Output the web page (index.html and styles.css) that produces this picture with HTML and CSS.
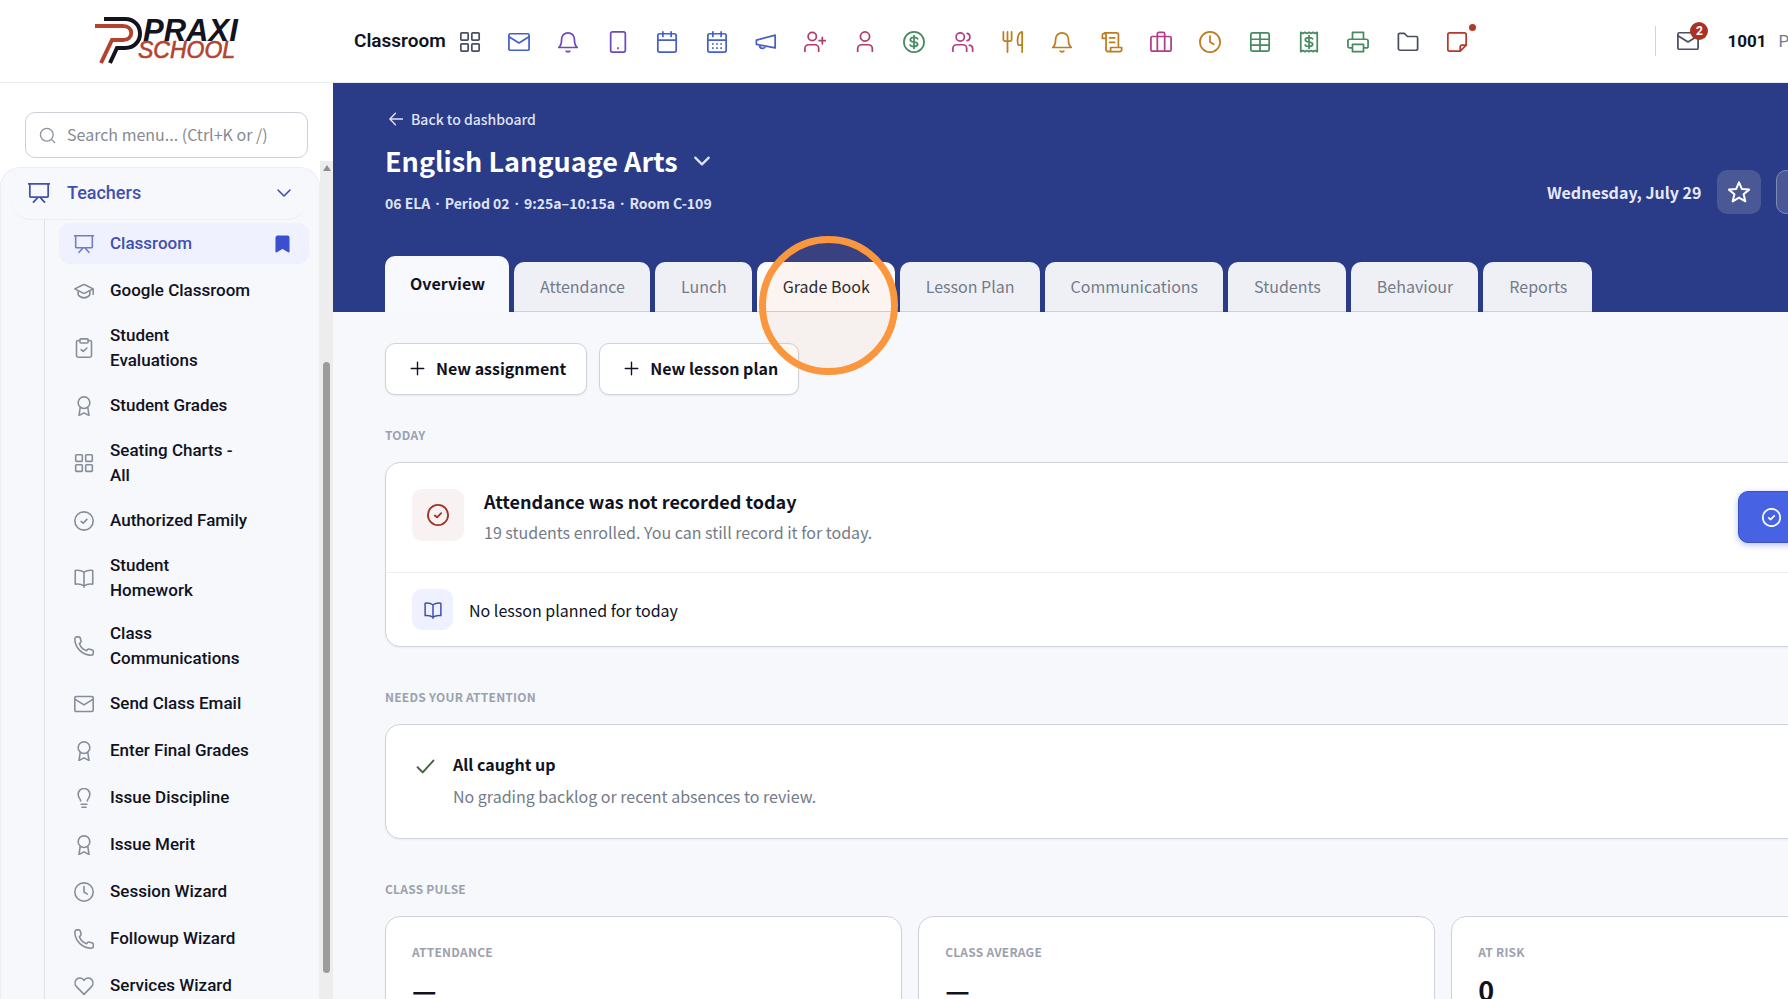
FILE: index.html
```html
<!DOCTYPE html>
<html lang="en">
<head>
    <meta charset="UTF-8">
    <meta name="viewport" content="width=device-width, initial-scale=1.0">
    <title>Classroom - Praxi School</title>
    <link rel="stylesheet" href="styles.css">
</head>
<body>
    <!-- icon sprite -->
    <svg class="sprite" aria-hidden="true">
        <symbol id="i-grid" viewBox="0 0 24 24"><rect x="2" y="2" width="8" height="8" rx="1"/><rect x="14" y="2" width="8" height="8" rx="1"/><rect x="2" y="14" width="8" height="8" rx="1"/><rect x="14" y="14" width="8" height="8" rx="1"/></symbol>
        <symbol id="i-mail" viewBox="0 0 24 24"><rect x="1" y="3" width="22" height="18" rx="1.5"/><path d="M1.5 6.5 12 13l10.500-6.500"/></symbol>
        <symbol id="i-bell" viewBox="0 0 24 24"><path d="M2 18c2.500-2 3-4.500 3-9a7 7 0 0 1 14 0c0 4.500.5 7 3 9zM10 22q2 1.500 4 0"/></symbol>
        <symbol id="i-phone" viewBox="0 0 24 24"><rect x="4" y="1" width="16" height="22" rx="2"/><path d="M12 18.500v.5"/></symbol>
        <symbol id="i-cal" viewBox="0 0 24 24"><rect x="2" y="3" width="20" height="20" rx="2"/><path d="M2 10h20M7.500 1v5M16.500 1v5"/></symbol>
        <symbol id="i-caldots" viewBox="0 0 24 24"><rect x="2" y="3" width="20" height="20" rx="2"/><path d="M2 10h20M7.500 1v5M16.500 1v5M7.500 14v.2M12 14v.2M16.500 14v.2M7.500 18.500v.2M12 18.500v.2M16.500 18.500v.2"/></symbol>
        <symbol id="i-horn" viewBox="0 0 24 24"><path d="M1.500 10 22 4.500v14L1.500 14.500zM5 15.500c0 4.500 6 4.500 6 1"/></symbol>
        <symbol id="i-useradd" viewBox="0 0 24 24"><circle cx="9" cy="6" r="4.500"/><path d="M1 22v-3a4 4 0 0 1 4-4h7a4 4 0 0 1 4 4v3M20 7v7M16.500 10.500h7"/></symbol>
        <symbol id="i-user" viewBox="0 0 24 24"><circle cx="12" cy="6" r="5"/><path d="M4 22v-2.500a4.500 4.500 0 0 1 4.500-4.500h7a4.500 4.500 0 0 1 4.500 4.500V22"/></symbol>
        <symbol id="i-dollar" viewBox="0 0 24 24"><circle cx="12" cy="12" r="11"/><path d="M16 8.500c-.5-1-1.500-1.500-4-1.500s-4 .7-4 2.500 1.500 2.300 4 2.500 4 .8 4 2.500-1.500 2.500-4 2.500-3.700-.5-4.200-1.700M12 5v14"/></symbol>
        <symbol id="i-users" viewBox="0 0 24 24"><circle cx="9" cy="6.500" r="4.500"/><path d="M1 22v-3a4 4 0 0 1 4-4h7a4 4 0 0 1 4 4v3M16.500 2.500c4 .5 4 7.500 0 8M19 15.500c2.500.5 3.500 2 3.500 3.500v3"/></symbol>
        <symbol id="i-fork" viewBox="0 0 24 24"><path d="M1.500 1v8a2 2 0 0 0 2 2h5a2 2 0 0 0 2-2V1M6 1v22M22 1v22M22 1c-3 0-5 4-5 9 0 3 .5 5.500 1.500 5.500H22"/></symbol>
        <symbol id="i-scroll" viewBox="0 0 24 24"><path d="M4 2h13a2 2 0 0 1 2 2v13M1.500 8h4V4.500a2 2 0 0 0-4 0zM5.500 8v12a2.500 2.500 0 0 0 2.500 2.500h12.500a2 2 0 0 0 2-2V18H10.500v2.500a2 2 0 0 1-2 2M9.500 7.500H15M9.500 12.500H15"/></symbol>
        <symbol id="i-case" viewBox="0 0 24 24"><rect x="1" y="6" width="22" height="16" rx="1.500"/><path d="M8 22V3a1.500 1.500 0 0 1 1.500-1.500h5A1.500 1.500 0 0 1 16 3v19"/></symbol>
        <symbol id="i-clock" viewBox="0 0 24 24"><circle cx="12" cy="12" r="11"/><path d="M12 5.500V12l4 2.500"/></symbol>
        <symbol id="i-table" viewBox="0 0 24 24"><rect x="2" y="2" width="20" height="20" rx="2"/><path d="M2 9h20M2 15.500h20M12 2v20"/></symbol>
        <symbol id="i-receipt" viewBox="0 0 24 24"><path d="M3 1.500l2.300 1.200L7.500 1.500l2.300 1.200L12 1.500l2.200 1.200 2.300-1.200 2.200 1.200L21 1.500v21l-2.300-1.200-2.200 1.200-2.300-1.200L12 22.500l-2.200-1.200-2.300 1.200-2.200-1.200L3 22.500zM16 8.500c-.5-1-1.500-1.300-4-1.300s-4 .7-4 2.400 1.500 2.200 4 2.400 4 .8 4 2.400-1.500 2.400-4 2.400-3.700-.5-4.200-1.500M12 5v14"/></symbol>
        <symbol id="i-print" viewBox="0 0 24 24"><path d="M6 9V1.500h12V9M6 18.500H3a2 2 0 0 1-2-2V11a2 2 0 0 1 2-2h18a2 2 0 0 1 2 2v5.500a2 2 0 0 1-2 2h-3M6 14.500h12v8H6z"/></symbol>
        <symbol id="i-folder" viewBox="0 0 24 24"><path d="M1.500 4a1.500 1.500 0 0 1 1.500-1.500h5L11.500 6H21a1.500 1.500 0 0 1 1.500 1.500V19a2 2 0 0 1-2 2h-17a2 2 0 0 1-2-2z"/></symbol>
        <symbol id="i-note" viewBox="0 0 24 24"><path d="M22 15.500V4a2 2 0 0 0-2-2H4a2 2 0 0 0-2 2v16a2 2 0 0 0 2 2h11.500zM15.500 22v-4.500a2 2 0 0 1 2-2H22"/></symbol>
        <symbol id="i-board" viewBox="0 0 24 24"><path d="M.5 2h23M2 2v13.500a1 1 0 0 0 1 1h18a1 1 0 0 0 1-1V2M10.500 17 6 22M13.500 17l4.500 5"/></symbol>
        <symbol id="i-cap" viewBox="0 0 24 24"><path d="M1 9.500 11 4.500q1-.5 2 0l10 5-10 5q-1 .5-2 0zM5 12v4.500c3.500 5 10.500 5 14 0V12M23 9.500V16"/></symbol>
        <symbol id="i-clip" viewBox="0 0 24 24"><path d="M7 3H5a2 2 0 0 0-2 2v16a2 2 0 0 0 2 2h14a2 2 0 0 0 2-2V5a2 2 0 0 0-2-2h-2M8.500 14l2.500 2 4.500-4"/><rect x="7" y="1" width="10" height="5" rx="1.500"/></symbol>
        <symbol id="i-award" viewBox="0 0 24 24"><circle cx="12" cy="8" r="7"/><path d="M7.500 13.500 6 23.300l6-3 6 3-1.500-9.800"/></symbol>
        <symbol id="i-check" viewBox="0 0 24 24"><circle cx="12" cy="12" r="11"/><path d="M8.500 12.500l2.500 2 4.500-4.500"/></symbol>
        <symbol id="i-book" viewBox="0 0 24 24"><path d="M12 5C9 3 5 2.500 1.500 3v16.500C5 19 9 19.500 12 21.500 15 19.500 19 19 22.500 19.500V3C19 2.500 15 3 12 5zM12 5v18"/></symbol>
        <symbol id="i-tel" viewBox="0 0 24 24"><path d="M1 3.500A2.500 2.500 0 0 1 3.500 1h2.300q1.200 0 1.600 1.200l1.100 4q.3 1-.6 1.700L6.500 9.200c1.500 4 4.500 7 8.500 8.500l1.300-1.500q.7-.8 1.700-.5l4 1.100q1.200.4 1.200 1.600v2.100a2.500 2.500 0 0 1-2.500 2.500C10 23 1 14 1 3.500z"/></symbol>
        <symbol id="i-bulb" viewBox="0 0 24 24"><path d="M8 15.500c0-2.500-3-3.500-3-8a7 7 0 0 1 14 0c0 4.500-3 5.500-3 8M8.500 19.500h7M9.500 23h5"/></symbol>
        <symbol id="i-heart" viewBox="0 0 24 24"><path d="M12 22 3 12.800C-2.500 6 6.500-2 12 5.200 17.500-2 26.500 6 21 12.800z"/></symbol>
        <symbol id="i-search" viewBox="0 0 24 24"><circle cx="11" cy="11" r="9"/><path d="M17.500 17.500 22 22"/></symbol>
        <symbol id="i-down" viewBox="0 0 24 24"><path d="M3 7.500l9 9 9-9"/></symbol>
        <symbol id="i-back" viewBox="0 0 24 24"><path d="M23 12H2M11 2 1.500 12 11 22"/></symbol>
        <symbol id="i-plus" viewBox="0 0 24 24"><path d="M12 2v20M2 12h20"/></symbol>
        <symbol id="i-tick" viewBox="0 0 24 24"><path d="M2 13l6.500 6.500L22 4.500"/></symbol>
        <symbol id="i-star" viewBox="0 0 24 24"><path d="M12 1.500l3.100 7.200 7.900.7-6 5.100 1.900 7.700L12 18.100l-6.900 4.100L7 14.500 1 9.400l7.900-.7z"/></symbol>
        <symbol id="i-mark" viewBox="0 0 24 24"><path d="M3 3a2 2 0 0 1 2-2h14a2 2 0 0 1 2 2v20l-9-5-9 5z"/></symbol>
    </svg>

    <div class="app">
        <header class="topbar">
            <a class="brand" href="#" aria-label="Praxi School">
                <svg class="brand-logo" viewBox="0 0 150 56" aria-hidden="true">
                    <path class="mark-dark" d="M14 6h21c20 0 20 29 0 29h-8L20 50"/>
                    <path class="mark-red" d="M5 13h28c11 0 11 14 0 14H22L11 50"/>
                    <text class="name-dark" x="53" y="28" font-size="31">PRAXI</text>
                    <text class="name-red" x="48" y="45" font-size="23">SCHOOL</text>
                </svg>
            </a>
            <div class="topbar-title">Classroom</div>
            <nav class="quick-links" aria-label="Quick links">
                <a href="#" class="slate" aria-label="Apps"><svg class="icon"><use href="#i-grid"/></svg></a>
                <a href="#" class="blue" aria-label="Mail"><svg class="icon"><use href="#i-mail"/></svg></a>
                <a href="#" class="violet" aria-label="Alerts"><svg class="icon"><use href="#i-bell"/></svg></a>
                <a href="#" class="violet" aria-label="Mobile"><svg class="icon"><use href="#i-phone"/></svg></a>
                <a href="#" class="blue" aria-label="Calendar"><svg class="icon"><use href="#i-cal"/></svg></a>
                <a href="#" class="blue" aria-label="Schedule"><svg class="icon"><use href="#i-caldots"/></svg></a>
                <a href="#" class="blue" aria-label="Announcements"><svg class="icon"><use href="#i-horn"/></svg></a>
                <a href="#" class="rose" aria-label="Add person"><svg class="icon"><use href="#i-useradd"/></svg></a>
                <a href="#" class="rose" aria-label="Person"><svg class="icon"><use href="#i-user"/></svg></a>
                <a href="#" class="green" aria-label="Payments"><svg class="icon"><use href="#i-dollar"/></svg></a>
                <a href="#" class="pink" aria-label="Families"><svg class="icon"><use href="#i-users"/></svg></a>
                <a href="#" class="amber" aria-label="Lunch"><svg class="icon"><use href="#i-fork"/></svg></a>
                <a href="#" class="amber" aria-label="Bell"><svg class="icon"><use href="#i-bell"/></svg></a>
                <a href="#" class="amber" aria-label="Records"><svg class="icon"><use href="#i-scroll"/></svg></a>
                <a href="#" class="pink" aria-label="Staff"><svg class="icon"><use href="#i-case"/></svg></a>
                <a href="#" class="amber" aria-label="Time"><svg class="icon"><use href="#i-clock"/></svg></a>
                <a href="#" class="green" aria-label="Tables"><svg class="icon"><use href="#i-table"/></svg></a>
                <a href="#" class="green" aria-label="Receipts"><svg class="icon"><use href="#i-receipt"/></svg></a>
                <a href="#" class="green" aria-label="Print"><svg class="icon"><use href="#i-print"/></svg></a>
                <a href="#" class="slate" aria-label="Files"><svg class="icon"><use href="#i-folder"/></svg></a>
                <a href="#" class="red" aria-label="Notes"><svg class="icon"><use href="#i-note"/></svg><span class="dot"></span></a>
            </nav>
            <div class="account">
                <a href="#" class="inbox slate" aria-label="Inbox"><svg class="icon"><use href="#i-mail"/></svg><span class="badge">2</span></a>
                <strong class="account-id">1001</strong>
                <span class="account-name">P</span>
            </div>
        </header>

        <div class="layout">
            <aside class="sidebar">
                <label class="search">
                    <svg class="icon"><use href="#i-search"/></svg>
                    <input type="search" placeholder="Search menu... (Ctrl+K or /)" aria-label="Search menu">
                </label>
                <div class="menu-scroll">
                    <nav class="menu" aria-label="Main menu">
                        <button class="menu-group" type="button" aria-expanded="true">
                            <svg class="icon"><use href="#i-board"/></svg>
                            <span>Teachers</span>
                            <svg class="icon chevron"><use href="#i-down"/></svg>
                        </button>
                        <ul class="submenu">
                            <li><a class="active" href="#"><svg class="icon"><use href="#i-board"/></svg><span>Classroom</span><svg class="icon bookmark"><use href="#i-mark"/></svg></a></li>
                            <li><a href="#"><svg class="icon"><use href="#i-cap"/></svg><span>Google Classroom</span></a></li>
                            <li><a href="#"><svg class="icon"><use href="#i-clip"/></svg><span>Student Evaluations</span></a></li>
                            <li><a href="#"><svg class="icon"><use href="#i-award"/></svg><span>Student Grades</span></a></li>
                            <li><a href="#"><svg class="icon"><use href="#i-grid"/></svg><span>Seating Charts - All</span></a></li>
                            <li><a href="#"><svg class="icon"><use href="#i-check"/></svg><span>Authorized Family</span></a></li>
                            <li><a href="#"><svg class="icon"><use href="#i-book"/></svg><span>Student Homework</span></a></li>
                            <li><a href="#"><svg class="icon"><use href="#i-tel"/></svg><span>Class Communications</span></a></li>
                            <li><a href="#"><svg class="icon"><use href="#i-mail"/></svg><span>Send Class Email</span></a></li>
                            <li><a href="#"><svg class="icon"><use href="#i-award"/></svg><span>Enter Final Grades</span></a></li>
                            <li><a href="#"><svg class="icon"><use href="#i-bulb"/></svg><span>Issue Discipline</span></a></li>
                            <li><a href="#"><svg class="icon"><use href="#i-award"/></svg><span>Issue Merit</span></a></li>
                            <li><a href="#"><svg class="icon"><use href="#i-clock"/></svg><span>Session Wizard</span></a></li>
                            <li><a href="#"><svg class="icon"><use href="#i-tel"/></svg><span>Followup Wizard</span></a></li>
                            <li><a href="#"><svg class="icon"><use href="#i-heart"/></svg><span>Services Wizard</span></a></li>
                        </ul>
                    </nav>
                    <div class="scrollbar" aria-hidden="true">
                        <span class="scroll-up"></span>
                        <span class="scroll-thumb"></span>
                    </div>
                </div>
            </aside>

            <main class="main">
                <section class="hero">
                    <div class="hero-top">
                        <div>
                            <a class="back" href="#"><svg class="icon"><use href="#i-back"/></svg>Back to dashboard</a>
                            <h1 class="class-name">English Language Arts <button type="button" aria-label="Switch class"><svg class="icon"><use href="#i-down"/></svg></button></h1>
                            <p class="class-meta">06 ELA <span class="sep">·</span> Period 02 <span class="sep">·</span> 9:25a–10:15a <span class="sep">·</span> Room C-109</p>
                        </div>
                        <div class="hero-actions">
                            <span class="date">Wednesday, July 29</span>
                            <button class="star" type="button" aria-label="Favorite"><svg class="icon"><use href="#i-star"/></svg></button>
                            <button class="session" type="button" aria-label="Class options"></button>
                        </div>
                    </div>
                    <nav class="tabs" aria-label="Class sections">
                        <a class="tab current" href="#">Overview</a>
                        <a class="tab" href="#">Attendance</a>
                        <a class="tab" href="#">Lunch</a>
                        <a class="tab hover" href="#">Grade Book<span class="click-ring"></span></a>
                        <a class="tab" href="#">Lesson Plan</a>
                        <a class="tab" href="#">Communications</a>
                        <a class="tab" href="#">Students</a>
                        <a class="tab" href="#">Behaviour</a>
                        <a class="tab" href="#">Reports</a>
                    </nav>
                </section>

                <div class="content">
                    <div class="actions">
                        <button class="btn" type="button"><svg class="icon"><use href="#i-plus"/></svg>New assignment</button>
                        <button class="btn" type="button"><svg class="icon"><use href="#i-plus"/></svg>New lesson plan</button>
                    </div>

                    <h2 class="label">TODAY</h2>
                    <div class="card">
                        <div class="today-row">
                            <span class="tile tile-red"><svg class="icon"><use href="#i-check"/></svg></span>
                            <div class="today-text">
                                <h3>Attendance was not recorded today</h3>
                                <p>19 students enrolled. You can still record it for today.</p>
                            </div>
                            <button class="btn-primary" type="button" aria-label="Record attendance"><svg class="icon"><use href="#i-check"/></svg></button>
                        </div>
                        <div class="lesson-row">
                            <span class="tile tile-blue"><svg class="icon"><use href="#i-book"/></svg></span>
                            <span>No lesson planned for today</span>
                        </div>
                    </div>

                    <h2 class="label">NEEDS YOUR ATTENTION</h2>
                    <div class="card caught-up">
                        <svg class="icon"><use href="#i-tick"/></svg>
                        <div>
                            <h3>All caught up</h3>
                            <p>No grading backlog or recent absences to review.</p>
                        </div>
                    </div>

                    <h2 class="label">CLASS PULSE</h2>
                    <div class="stats">
                        <div class="card stat"><h3 class="stat-label">ATTENDANCE</h3><p class="stat-value">—</p></div>
                        <div class="card stat"><h3 class="stat-label">CLASS AVERAGE</h3><p class="stat-value">—</p></div>
                        <div class="card stat"><h3 class="stat-label">AT RISK</h3><p class="stat-value">0</p></div>
                    </div>
                </div>
            </main>
        </div>
    </div>
</body>
</html>
```

FILE: styles.css
```css
* {
    box-sizing: border-box;
}
html,
body {
    height: 100%;
    margin: 0;
    overflow: hidden;
}
body {
    font-family: "Noto Sans CJK SC", "Open Sans", sans-serif;
    font-size: 16px;
    line-height: 24px;
    color: #10131f;
    background-color: #f6f8fc;
}
h1, h2, h3, p, ul {
    margin: 0;
    padding: 0;
}
a {
    color: inherit;
    text-decoration: none;
}
button {
    font: inherit;
    color: inherit;
    cursor: pointer;
}
.sprite {
    position: absolute;
    width: 0;
    height: 0;
}
.icon {
    display: block;
    flex: none;
    width: 22px;
    height: 22px;
    fill: none;
    stroke: currentColor;
    stroke-width: 1.9;
    stroke-linecap: round;
    stroke-linejoin: round;
    overflow: visible;
}
/* wider than the window, the right side is cut off */
.app {
    display: flex;
    flex-direction: column;
    width: 113%;
    height: 100vh;
}

/* top bar */
.topbar {
    display: flex;
    align-items: center;
    flex: none;
    height: 83px;
    background-color: #fff;
    border-bottom: 1px solid #e9ebf0;
}
.brand {
    width: 333px;
    padding-left: 90px;
}
.brand-logo {
    display: block;
    width: 150px;
    height: 56px;
}
.mark-dark,
.mark-red {
    fill: none;
    stroke: #12131f;
    stroke-width: 4;
}
.mark-red {
    stroke: #b3432f;
}
.name-dark,
.name-red {
    font-family: "Liberation Sans", Arial, sans-serif;
    font-weight: bold;
    font-style: italic;
    fill: #12131f;
}
.name-red {
    fill: #b3432f;
    font-weight: normal;
    stroke: #b3432f;
    stroke-width: 0.6;
}
.topbar-title {
    margin: 0 13px 0 21px;
    font-family: Roboto, "Noto Sans", sans-serif;
    font-size: 19px;
    font-weight: 600;
}
.quick-links {
    display: flex;
    flex: 1;
    justify-content: space-between;
    padding: 1px 187px 0 0;
}
.quick-links a,
.inbox {
    position: relative;
}
.slate { color: #4a4f62; }
.blue { color: #4560c8; }
.violet { color: #7047bd; }
.rose { color: #b03c69; }
.pink { color: #b23d86; }
.green { color: #468a60; }
.amber { color: #bd7c1e; }
.red { color: #b3392a; }
.dot {
    position: absolute;
    top: -7px;
    right: -8px;
    width: 7px;
    height: 7px;
    border-radius: 50%;
    background-color: #b3392a;
}
.account {
    display: flex;
    align-items: center;
    flex: none;
    width: 365px;
    height: 30px;
    padding-left: 21px;
    border-left: 1px solid #d0d3da;
    font-family: Roboto, "Noto Sans", sans-serif;
    font-size: 17px;
}
.badge {
    position: absolute;
    top: -8px;
    right: -9px;
    width: 18px;
    height: 18px;
    border-radius: 50%;
    background-color: #a83324;
    color: #fff;
    font-size: 12px;
    font-weight: bold;
    line-height: 18px;
    text-align: center;
}
.account-id {
    margin: 0 12px 0 28px;
}
.account-name {
    color: #747b8b;
}

/* sidebar */
.layout {
    display: flex;
    flex: 1;
    min-height: 0;
}
.sidebar {
    display: flex;
    flex-direction: column;
    flex: none;
    width: 333px;
    background-color: #fff;
}
.search {
    display: flex;
    align-items: center;
    gap: 11px;
    height: 46px;
    margin: 29px 25px 3px;
    padding: 0 13px;
    border: 1px solid #cdd0d7;
    border-radius: 10px;
    color: #8d93a0;
}
.search .icon {
    width: 17px;
    height: 17px;
}
.search input {
    flex: 1;
    min-width: 0;
    padding: 0 0 2px;
    border: none;
    outline: none;
    background: none;
    font: inherit;
    color: #10131f;
}
.search input::placeholder {
    color: #858a95;
}
.menu-scroll {
    display: flex;
    flex: 1;
    min-height: 0;
}
.menu {
    flex: 1;
    margin-top: 6px;
    overflow: hidden;
    border: 1px solid #eceef3;
    border-bottom: none;
    border-radius: 20px 20px 0 0;
    background-color: #f6f8fc;
    font-family: Roboto, "Noto Sans", sans-serif;
    font-size: 17px;
    font-weight: 500;
}
.menu-group {
    display: flex;
    align-items: center;
    gap: 17px;
    width: 296px;
    height: 52px;
    margin-left: 10px;
    padding: 0 15px 2px 17px;
    border: none;
    border-bottom: 1px solid #eceef3;
    border-radius: 20px;
    background: none;
    color: #4150b0;
    font-size: 18px;
    text-align: left;
}
.menu-group span {
    flex: 1;
}
.menu-group .chevron {
    width: 16px;
    height: 16px;
    stroke-width: 2.4;
}
.submenu {
    margin-left: 43px;
    padding: 3px 0 0 14px;
    border-left: 1px solid #dfe2e9;
    list-style: none;
}
.submenu a {
    display: flex;
    align-items: center;
    gap: 16px;
    width: 250px;
    min-height: 41px;
    margin-bottom: 6px;
    padding: 6px 18px 6px 15px;
    border-radius: 10px;
    line-height: 25px;
}
.submenu span {
    width: 143px;
}
.submenu .icon {
    width: 20px;
    height: 20px;
    color: #878c99;
}
.submenu .active {
    background-color: #eff2fe;
    color: #4150b0;
}
.submenu .active .icon {
    color: #6f7cc9;
}
.submenu .active span {
    flex: 1;
}
.submenu .active .bookmark {
    width: 17px;
    height: 18px;
    color: #3a4fd0;
    fill: currentColor;
}
.scrollbar {
    display: flex;
    flex-direction: column;
    align-items: center;
    width: 13px;
    background-color: #ededed;
}
.scroll-up {
    margin: 4px 0 191px;
    border: 4px solid transparent;
    border-top: none;
    border-bottom: 6px solid #8f8f8f;
}
.scroll-thumb {
    flex: 1;
    width: 7px;
    margin-bottom: 26px;
    border-radius: 4px;
    background-color: #9c9c9c;
}

/* class header */
.main {
    flex: 1;
    min-width: 0;
}
.hero {
    padding: 24px 52px 0;
    background-color: #2a3b87;
    color: #fff;
}
.hero-top {
    display: flex;
    align-items: flex-end;
    justify-content: space-between;
}
.back {
    display: flex;
    align-items: center;
    gap: 8px;
    padding-left: 4px;
    color: #dfe3f8;
    font-size: 14px;
    font-weight: 500;
}
.back .icon {
    width: 14px;
    height: 14px;
    stroke-width: 2.4;
}
.class-name {
    display: flex;
    align-items: center;
    gap: 15px;
    margin: 10px 0;
    font-size: 27px;
    font-weight: 700;
    line-height: 40px;
}
.class-name button {
    padding: 0;
    border: none;
    background: none;
    color: #dfe3f8;
}
.class-name .icon {
    width: 18px;
    height: 18px;
    stroke-width: 3;
}
.class-meta {
    color: #dfe3f8;
    font-size: 14px;
    font-weight: 700;
}
/* the CJK middle dot is too wide here */
.sep {
    margin: 0 2px;
    font-family: "Open Sans", sans-serif;
}
.hero-actions {
    display: flex;
    align-items: center;
    padding-bottom: 2px;
}
.date {
    margin-right: 16px;
    color: #e6e9fa;
    font-weight: 700;
}
.star,
.session {
    display: flex;
    align-items: center;
    justify-content: center;
    width: 44px;
    height: 44px;
    padding: 0;
    border: none;
    border-radius: 10px;
    background-color: #4a5896;
}
.star .icon {
    stroke-width: 2.2;
}
.session {
    width: 192px;
    margin-left: 15px;
    border: 1px solid #8089b8;
}
.tabs {
    display: flex;
    align-items: flex-end;
    gap: 5px;
    margin-top: 40px;
}
.tab {
    position: relative;
    height: 50px;
    padding: 0 25px 0 26px;
    border-bottom: 1px solid #cdd0da;
    border-radius: 10px 10px 0 0;
    background-color: #eff0f6;
    color: #747b88;
    line-height: 48px;
}
.tab.hover {
    background-color: #fbfbfe;
    color: #20232e;
}
.tab.current {
    height: 56px;
    padding: 0 24px 0 25px;
    border-bottom: none;
    background-color: #f8f9fd;
    color: #10131f;
    font-weight: 700;
    line-height: 54px;
}
.click-ring {
    position: absolute;
    top: -26px;
    left: 2px;
    z-index: 5;
    width: 139px;
    height: 139px;
    border: 7px solid #fa963e;
    border-radius: 50%;
    background-color: rgba(250, 150, 62, 0.07);
    pointer-events: none;
}

/* content */
.content {
    padding: 31px 52px 0;
}
.actions {
    display: flex;
    gap: 12px;
}
.btn {
    display: flex;
    align-items: center;
    gap: 11px;
    height: 52px;
    padding: 0 20px 2px 24px;
    border: 1px solid #d0d3dc;
    border-radius: 10px;
    background-color: #fff;
    box-shadow: 0 1px 2px rgba(16, 19, 31, 0.08);
    font-weight: 700;
}
.btn .icon {
    width: 15px;
    height: 15px;
    stroke-width: 2.2;
}
.label,
.stat-label {
    color: #9ca1ae;
    font-size: 12px;
    font-weight: 700;
    letter-spacing: 0.02em;
    line-height: 20px;
}
.label {
    margin: 40px 0 17px;
}
.actions + .label {
    margin-top: 30px;
}
.card {
    border: 1px solid #d0d3dc;
    border-radius: 15px;
    background-color: #fff;
    box-shadow: 0 1px 2px rgba(16, 19, 31, 0.05);
}
.card p {
    color: #747b88;
}
.today-row {
    display: flex;
    gap: 20px;
    height: 110px;
    padding: 26px;
    border-bottom: 1px solid #eceef2;
}
.today-text {
    flex: 1;
}
.today-text h3 {
    margin-bottom: 7px;
    font-size: 18px;
    font-weight: 700;
}
.tile {
    display: flex;
    align-items: center;
    justify-content: center;
    flex: none;
    width: 52px;
    height: 52px;
    border-radius: 10px;
}
.tile-red {
    background-color: #f9f2f2;
    color: #9f3527;
}
.tile-red .icon {
    stroke-width: 2;
}
.tile-blue {
    width: 41px;
    height: 41px;
    background-color: #eff2fe;
    color: #4150b0;
}
.tile-blue .icon {
    width: 18px;
    height: 18px;
    stroke-width: 2;
}
.btn-primary {
    display: flex;
    align-items: center;
    width: 203px;
    height: 52px;
    margin-top: 2px;
    padding: 0 23px;
    border: 1px solid #3c51c4;
    border-radius: 10px;
    background-color: #4763e4;
    box-shadow: 0 2px 6px rgba(71, 99, 228, 0.4);
    color: #fff;
}
.btn-primary .icon {
    width: 19px;
    height: 19px;
    stroke-width: 2.2;
}
.lesson-row {
    display: flex;
    align-items: center;
    gap: 16px;
    height: 73px;
    padding: 0 26px;
}
.caught-up {
    display: flex;
    gap: 18px;
    padding: 27px 30px 30px;
}
.caught-up .icon {
    width: 19px;
    height: 19px;
    margin-top: 5px;
    color: #44633f;
    stroke-width: 2.4;
}
.caught-up h3 {
    margin-bottom: 8px;
    font-size: 16px;
    font-weight: 700;
}
.stats {
    display: grid;
    grid-template-columns: repeat(3, 1fr);
    gap: 16px;
}
.stat {
    padding: 25px 26px;
}
.card .stat-value {
    margin-top: 8px;
    color: #10131f;
    font-size: 27px;
    font-weight: 700;
    line-height: 40px;
}
```
